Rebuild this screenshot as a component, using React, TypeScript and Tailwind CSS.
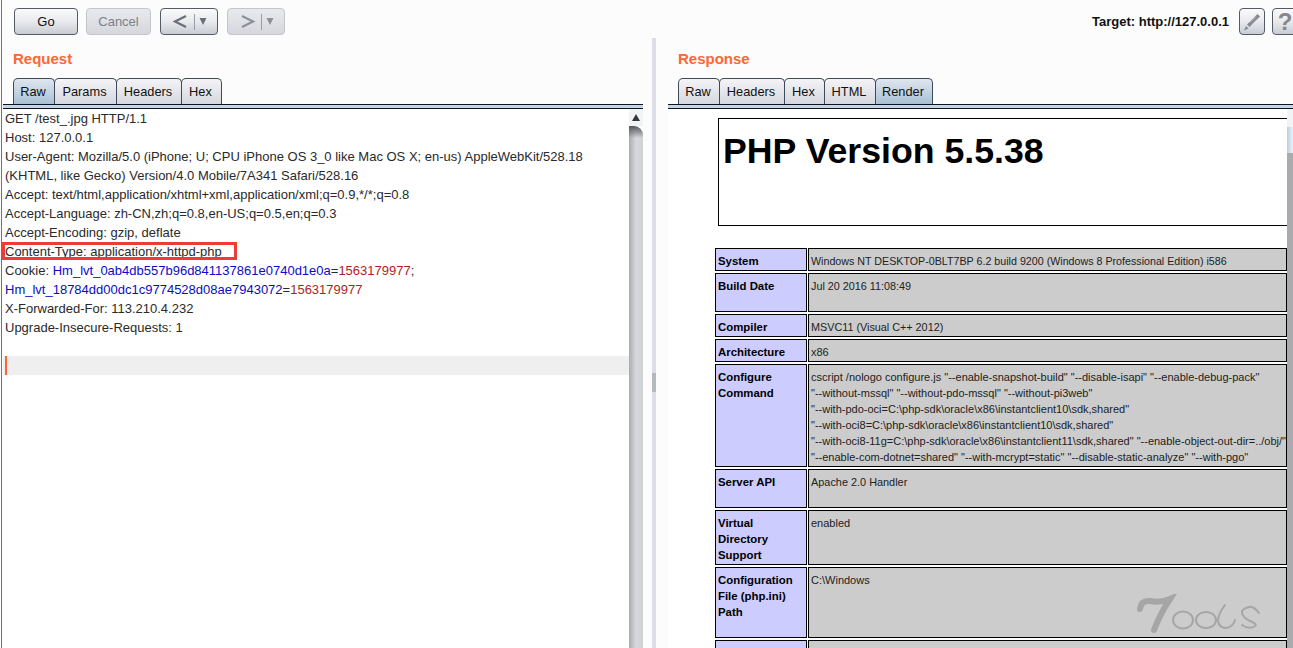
const tabShape = "h-[26px] -mr-px pr-[2px] flex items-center justify-center rounded-t-[5px] border border-b-0 border-[#3f4a58] text-[12.8px] text-[#111]"

function Tabs({ items, active }: { items: [string, number][]; active: string }) {
  return (
    <div className="flex h-[26px]">
      {items.map(([label, width]) => (
        <div
          key={label}
          style={{ width }}
          className={`${tabShape} ${label === active ? "bg-gradient-to-b from-[#dfe6ee] to-[#a9c1d6]" : "bg-gradient-to-b from-[#f4f4f7] to-[#d6d8df]"}`}
        >
          {label}
        </div>
      ))}
    </div>
  )
}

function TabRule() {
  return <div className="h-[5px] border-y border-[#10161f] bg-[#c5d6e8]" />
}

function ToolButton({ children, width, off }: { children: React.ReactNode; width: string; off?: boolean }) {
  return (
    <div
      className={`${width} h-[27px] flex items-center justify-center rounded-[4px] border text-[13px] ${
        off
          ? "border-[#c4c6cc] bg-gradient-to-b from-[#e9eaee] to-[#d5d7dd] text-[#7d8087]"
          : "border-[#555b66] bg-gradient-to-b from-[#fafafb] via-[#e9eaee] to-[#c9ccd3] text-[#111]"
      }`}
    >
      {children}
    </div>
  )
}

function HistoryButton({ dir, off }: { dir: "left" | "right"; off?: boolean }) {
  const color = off ? "#8d9097" : "#6a6e76"
  return (
    <ToolButton width="w-[58px]" off={off}>
      <svg width="44" height="18" viewBox="0 0 44 18" fill="none">
        <path d={dir === "left" ? "M19 3 8 8.500l11 5.500" : "M8 3l11 5.500L8 14"} stroke={color} strokeWidth="2.200" />
        <path d="M27.500 1v16" stroke="#9a9da5" />
        <path d="M32.500 5h7l-3.500 7z" fill={color} />
      </svg>
    </ToolButton>
  )
}

function Scrollbar() {
  return (
    <div className="w-[14px] shrink-0 flex flex-col">
      <div className="h-[17px] flex items-center justify-center bg-[#f2f3f5]">
        <svg width="8" height="7" viewBox="0 0 8 7">
          <path d="M4 0l4 7H0z" fill="#33373d" />
        </svg>
      </div>
      <div className="flex-1 rounded-tr-[9px] overflow-hidden bg-gradient-to-r from-[#a9abb1] via-[#d6d8dc] to-[#cfd1d6]">
        <div className="h-[12px] bg-gradient-to-b from-[#55575c] to-transparent" />
      </div>
    </div>
  )
}

const lineClass = "h-[19px] whitespace-nowrap"
const blue = "text-[#0b0bc4]"
const red = "text-[#ac1f1f]"

function RequestPane() {
  return (
    <div className="w-[640px] shrink-0 ml-[3px] flex flex-col">
      <div className="h-[40px] pl-[10px] pt-[12px] text-[15px] leading-[18px] font-bold text-[#ff6633]">Request</div>
      <div className="pl-[10px]">
        <Tabs items={[["Raw", 42], ["Params", 63], ["Headers", 66], ["Hex", 41]]} active="Raw" />
      </div>
      <TabRule />
      <div className="flex-1 min-h-0 flex bg-white">
        <div className="flex-1 min-w-0 pl-[2px] text-[13px] leading-[19px] text-[#2a2a2a]">
          <div className={lineClass}>GET /test_.jpg HTTP/1.1</div>
          <div className={lineClass}>Host: 127.0.0.1</div>
          <div className={lineClass}>User-Agent: Mozilla/5.0 (iPhone; U; CPU iPhone OS 3_0 like Mac OS X; en-us) AppleWebKit/528.18</div>
          <div className={lineClass}>(KHTML, like Gecko) Version/4.0 Mobile/7A341 Safari/528.16</div>
          <div className={lineClass}>Accept: text/html,application/xhtml+xml,application/xml;q=0.9,*/*;q=0.8</div>
          <div className={lineClass}>Accept-Language: zh-CN,zh;q=0.8,en-US;q=0.5,en;q=0.3</div>
          <div className={lineClass}>Accept-Encoding: gzip, deflate</div>
          <div className="relative h-[19px] whitespace-nowrap">
            Content-Type: application/x-httpd-php
            <div className="absolute -left-[3px] top-0 w-[235px] h-[18px] border-[3px] border-[#f03a3a]" />
          </div>
          <div className={lineClass}>
            Cookie: <span className={blue}>Hm_lvt_0ab4db557b96d841137861e0740d1e0a</span>=<span className={red}>1563179977</span>;
          </div>
          <div className={lineClass}>
            <span className={blue}>Hm_lvt_18784dd00dc1c9774528d08ae7943072</span>=<span className={red}>1563179977</span>
          </div>
          <div className={lineClass}>X-Forwarded-For: 113.210.4.232</div>
          <div className={lineClass}>Upgrade-Insecure-Requests: 1</div>
          <div className="h-[19px]" />
          <div className="h-[19px] -ml-[2px] bg-[#efefef] flex">
            <div className="ml-[2px] w-[2px] bg-[#ff6633]" />
          </div>
        </div>
        <Scrollbar />
      </div>
    </div>
  )
}

const phpRows: { label: string[]; value: string[]; height: string; size: string }[] = [
  { label: ["System"], value: ["Windows NT DESKTOP-0BLT7BP 6.2 build 9200 (Windows 8 Professional Edition) i586"], height: "h-[23px]", size: "text-[10.7px]" },
  { label: ["Build Date"], value: ["Jul 20 2016 11:08:49"], height: "h-[39px]", size: "text-[10.8px]" },
  { label: ["Compiler"], value: ["MSVC11 (Visual C++ 2012)"], height: "h-[23px]", size: "text-[10.8px]" },
  { label: ["Architecture"], value: ["x86"], height: "h-[23px]", size: "text-[11px]" },
  {
    label: ["Configure", "Command"],
    value: [
      'cscript /nologo configure.js "--enable-snapshot-build" "--disable-isapi" "--enable-debug-pack"',
      '"--without-mssql" "--without-pdo-mssql" "--without-pi3web"',
      '"--with-pdo-oci=C:\\php-sdk\\oracle\\x86\\instantclient10\\sdk,shared"',
      '"--with-oci8=C:\\php-sdk\\oracle\\x86\\instantclient10\\sdk,shared"',
      '"--with-oci8-11g=C:\\php-sdk\\oracle\\x86\\instantclient11\\sdk,shared" "--enable-object-out-dir=../obj/"',
      '"--enable-com-dotnet=shared" "--with-mcrypt=static" "--disable-static-analyze" "--with-pgo"',
    ],
    height: "h-[103px]",
    size: "text-[11px]",
  },
  { label: ["Server API"], value: ["Apache 2.0 Handler"], height: "h-[39px]", size: "text-[10.9px]" },
  { label: ["Virtual", "Directory", "Support"], value: ["enabled"], height: "h-[55px]", size: "text-[11px]" },
  { label: ["Configuration", "File (php.ini)", "Path"], value: ["C:\\Windows"], height: "h-[71px]", size: "text-[11px]" },
  { label: [""], value: [""], height: "h-[40px]", size: "text-[11px]" },
]

function PhpInfo() {
  return (
    <div className="relative flex-1 min-w-0 overflow-hidden bg-white font-['Liberation_Sans',sans-serif]">
      <div className="ml-[50px] mt-[9px] h-[108px] border border-r-0 border-black pl-[4px] pt-[10px]">
        <div className="text-[35.7px] leading-[44px] font-bold text-black whitespace-nowrap">PHP Version 5.5.38</div>
      </div>
      <div className="ml-[47px] mt-[22px] flex flex-col gap-[2px]">
        {phpRows.map((row, i) => (
          <div key={i} className={`flex gap-[1px] ${row.height}`}>
            <div className="w-[92px] shrink-0 border border-black bg-[#ccccff] pl-[2px] pt-[4px] text-[11.4px] leading-[16px] font-bold text-black">
              {row.label.map((l) => (
                <div key={l}>{l}</div>
              ))}
            </div>
            <div className={`flex-1 border border-black bg-[#cccccc] pl-[2px] pt-[4px] ${row.size} leading-[16px] text-[#222] whitespace-nowrap overflow-hidden`}>
              {row.value.map((v) => (
                <div key={v}>{v}</div>
              ))}
            </div>
          </div>
        ))}
      </div>
      <svg className="absolute left-[468px] top-[485px]" width="130" height="50" viewBox="0 0 130 50" fill="none" stroke="#a6a6a6" strokeLinecap="round">
        <path d="M4 15Q5 6 14 7Q25 9 34 5Q24 20 18 36" strokeWidth="6" />
        <ellipse cx="47" cy="26" rx="10" ry="8.500" strokeWidth="2" />
        <ellipse cx="70" cy="26" rx="10" ry="8" strokeWidth="2" />
        <path d="M89 11Q82 20 82 27Q83 34 90 34Q97 33 99 26" strokeWidth="2" />
        <path d="M123 19Q118 12 113 13Q105 15 106 19Q107 23 112 26Q122 30 119 32Q113 36 106 31" strokeWidth="2" />
      </svg>
    </div>
  )
}

function ResponsePane() {
  return (
    <div className="flex-1 min-w-0 flex flex-col">
      <div className="h-[40px] pl-[10px] pt-[12px] text-[15px] leading-[18px] font-bold text-[#ff6633]">Response</div>
      <div className="pl-[10px]">
        <Tabs items={[["Raw", 42], ["Headers", 66], ["Hex", 41], ["HTML", 52], ["Render", 58]]} active="Render" />
      </div>
      <TabRule />
      <div className="flex-1 min-h-0 flex">
        <PhpInfo />
        <div className="w-[6px] shrink-0 flex flex-col bg-[#a9abae]">
          <div className="h-[18px] bg-[#f2f3f5]" />
          <div className="h-[26px] bg-gradient-to-r from-[#b8cfe2] to-[#eef2f6]" />
        </div>
      </div>
    </div>
  )
}

export default function App() {
  return (
    <div className="relative h-[648px] w-[1293px] overflow-hidden flex flex-col bg-[#fcfcfd] font-['Liberation_Sans',Arial,sans-serif]">
      <div className="h-[38px] shrink-0 flex items-start pt-[8px] pl-[14px]">
        <ToolButton width="w-[64px]">Go</ToolButton>
        <div className="ml-[8px]">
          <ToolButton width="w-[65px]" off>Cancel</ToolButton>
        </div>
        <div className="ml-[9px]">
          <HistoryButton dir="left" />
        </div>
        <div className="ml-[9px]">
          <HistoryButton dir="right" off />
        </div>
        <div className="ml-auto flex items-center">
          <span className="text-[13px] font-bold text-[#111]">Target: http://127.0.0.1</span>
          <div className="ml-[10px]">
            <ToolButton width="w-[26px]">
              <svg width="20" height="20" viewBox="0 0 20 20" fill="none">
                <path d="M15.500 2 18 4.500 7.500 15 5 12.500z" fill="#85888e" />
                <path d="M8 10.500 14 4.500M10 12.500l6-6" stroke="#d4d6da" strokeWidth="0.700" />
                <path d="M4 14l2.500 2.500L2 18.500z" fill="#85888e" />
              </svg>
            </ToolButton>
          </div>
          <div className="ml-[7px] -mr-[5px]">
            <ToolButton width="w-[26px]">
              <span className="text-[24px] leading-none font-bold text-[#85888e]">?</span>
            </ToolButton>
          </div>
        </div>
      </div>
      <div className="flex-1 min-h-0 flex">
        <RequestPane />
        <div className="w-[25px] shrink-0 flex justify-center">
          <div className="ml-[-3px] w-[4px] bg-[#dcdde6] flex items-start">
            <div className="mt-[335px] h-[19px] w-[4px] bg-[#b6b8c0]" />
          </div>
        </div>
        <ResponsePane />
      </div>
      <div className="absolute left-[1px] top-0 h-[648px] w-px bg-[#3b82c4]" />
    </div>
  )
}
